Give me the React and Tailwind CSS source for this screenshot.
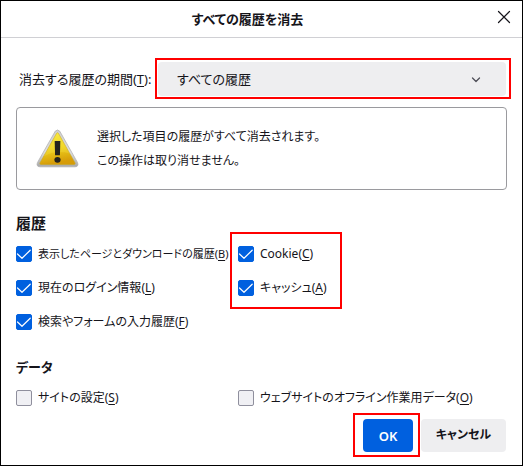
import { useState } from "react";

const historyItems = [
  { id: "history", label: "表示したページとダウンロードの履歴", accessKey: "B", small: true },
  { id: "sessions", label: "現在のログイン情報", accessKey: "L" },
  { id: "formdata", label: "検索やフォームの入力履歴", accessKey: "F" },
];

const siteItems = [
  { id: "cookies", label: "Cookie", accessKey: "C" },
  { id: "cache", label: "キャッシュ", accessKey: "A" },
];

function AccessKey({ value }) {
  return (
    <>
      (<span className="underline underline-offset-2">{value}</span>)
    </>
  );
}

function CheckItem({ item, checked, onChange }) {
  return (
    <label htmlFor={item.id} className="flex h-4 items-center gap-1.5 whitespace-nowrap">
      <span className="relative size-4 shrink-0">
        <input
          id={item.id}
          type="checkbox"
          checked={checked}
          onChange={() => onChange(item.id)}
          className="block size-4 appearance-none rounded-xs border border-[#8f8f9d] bg-[#f0f0f4] checked:border-[#0060df] checked:bg-[#0060df]"
        />
        {checked && (
          <svg viewBox="0 0 16 16" className="pointer-events-none absolute inset-0 size-4">
            <path d="M1.5 8 6 12.3 14.2 4.2" fill="none" stroke="#fff" strokeWidth="1.2" strokeLinecap="round" strokeLinejoin="round" />
          </svg>
        )}
      </span>
      <span className={item.small ? "text-[11px] leading-4" : "text-xs"}>
        {item.label}
        <AccessKey value={item.accessKey} />
      </span>
    </label>
  );
}

function WarningIcon() {
  return (
    <svg viewBox="0 0 44 40" className="h-[39px] w-[43px] shrink-0" aria-hidden="true">
      <defs>
        <linearGradient id="rim" x1="0" y1="0" x2="0" y2="1">
          <stop offset="0" stopColor="#d0d0d0" />
          <stop offset="0.6" stopColor="#dedede" />
          <stop offset="1" stopColor="#a8a8a8" />
        </linearGradient>
        <linearGradient id="face" x1="0" y1="0" x2="0.2" y2="1">
          <stop offset="0" stopColor="#f8ea3a" />
          <stop offset="0.55" stopColor="#eed01c" />
          <stop offset="1" stopColor="#d69c08" />
        </linearGradient>
      </defs>
      <path d="M19.6 2.4Q22 -.4 24.4 2.4L42.6 34.5Q44 38.5 40 38.8H4Q0 38.5 1.4 34.5Z" fill="url(#rim)" stroke="#b2b2b2" strokeWidth="0.8" />
      <path d="M21.1 4.4Q22 3.2 22.9 4.4L40 34.8Q40.6 36.3 39 36.4H5Q3.4 36.3 4 34.8Z" fill="url(#face)" stroke="#c9a51c" strokeWidth="0.6" />
      <path d="M21.1 4.4Q22 3.2 22.9 4.4L34.5 25Q20 21 8 28Z" fill="#fff36a" opacity="0.2" />
      <path d="M19.1 12.2H24.9L24.5 26.8H19.5Z" fill="#24231e" />
      <ellipse cx="22" cy="31.6" rx="3.2" ry="3" fill="#24231e" />
    </svg>
  );
}

export default function App() {
  const [range, setRange] = useState("all");
  const [selected, setSelected] = useState({
    history: true,
    sessions: true,
    formdata: true,
    cookies: true,
    cache: true,
    siteSettings: false,
    offlineApps: false,
  });

  const toggle = (id) => setSelected({ ...selected, [id]: !selected[id] });

  return (
    <div className="border border-black bg-white font-['Noto_Sans','Noto_Sans_CJK_JP',sans-serif] text-[13px] leading-4 text-[#15141a] [font-feature-settings:'palt']">
      <header className="relative flex h-[37px] items-center justify-center border-b border-[#d0d0d4]">
        <h1 className="pr-7 text-[13px] font-semibold">すべての履歴を消去</h1>
        <button type="button" aria-label="閉じる" className="absolute right-[11px] top-[9px]">
          <svg viewBox="0 0 14 14" className="size-3.5">
            <path d="M1.5 1.5l11 11M12.5 1.5l-11 11" fill="none" stroke="#15141a" strokeWidth="1.2" strokeLinecap="round" />
          </svg>
        </button>
      </header>

      <form className="px-[15px] pb-2 pt-5" onSubmit={(e) => e.preventDefault()}>
        <div className="-mr-1 flex items-center">
          <label htmlFor="range" className="w-[139px] shrink-0 whitespace-nowrap pl-[3px]">
            消去する履歴の期間
            <AccessKey value="T" />:
          </label>
          <div className="relative flex-1 border-2 border-[#f00] pb-px pl-px pr-[3px] pt-0.5">
            <select
              id="range"
              value={range}
              onChange={(e) => setRange(e.target.value)}
              className="block h-[34px] w-full appearance-none rounded bg-[#eeeef0] pl-[19px]"
            >
              <option value="hour">1 時間以内の履歴</option>
              <option value="today">今日の履歴</option>
              <option value="all">すべての履歴</option>
            </select>
            <svg viewBox="0 0 10 6" className="pointer-events-none absolute right-7 top-[17px] h-1.5 w-2.5">
              <path d="M1.5 1 5 4.5 8.5 1" fill="none" stroke="#4f4f58" strokeWidth="1.3" strokeLinecap="round" strokeLinejoin="round" />
            </svg>
          </div>
        </div>

        <div className="mt-2 flex h-[83px] items-center gap-[18px] rounded border border-[#9a9a9e] pl-[19px]">
          <WarningIcon />
          <p className="text-xs leading-6">
            選択した項目の履歴がすべて消去されます。
            <br />
            この操作は取り消せません。
          </p>
        </div>

        <fieldset className="mt-[23px]">
          <legend className="text-[15px] font-semibold leading-5">履歴</legend>
          <div className="mt-[13px] grid grid-cols-[222px_1fr]">
            <div className="flex flex-col gap-[18px]">
              {historyItems.map((item) => (
                <CheckItem key={item.id} item={item} checked={selected[item.id]} onChange={toggle} />
              ))}
            </div>
            <div className="relative flex flex-col gap-[18px]">
              {siteItems.map((item) => (
                <CheckItem key={item.id} item={item} checked={selected[item.id]} onChange={toggle} />
              ))}
              <div className="pointer-events-none absolute -left-2 -top-3.5 h-[77px] w-28 border-2 border-[#f00]" />
            </div>
          </div>
        </fieldset>

        <fieldset className="mt-[27px]">
          <legend className="text-[13px] font-semibold leading-5">データ</legend>
          <div className="mt-[13px] grid grid-cols-[222px_1fr]">
            <CheckItem
              item={{ id: "siteSettings", label: "サイトの設定", accessKey: "S" }}
              checked={selected.siteSettings}
              onChange={toggle}
            />
            <CheckItem
              item={{ id: "offlineApps", label: "ウェブサイトのオフライン作業用データ", accessKey: "O" }}
              checked={selected.offlineApps}
              onChange={toggle}
            />
          </div>
        </fieldset>

        <div className="mr-px mt-[7px] flex items-center justify-end">
          <div className="border-2 border-[#f00] pb-[3px] pl-2 pr-[5px] pt-1">
            <button type="submit" className="block h-[33px] w-[50px] rounded bg-[#0060df] font-semibold text-white">
              OK
            </button>
          </div>
          <button type="button" className="ml-px h-[33px] w-[85px] rounded bg-[#eeeef0] text-xs font-semibold">
            キャンセル
          </button>
        </div>
      </form>
    </div>
  );
}
